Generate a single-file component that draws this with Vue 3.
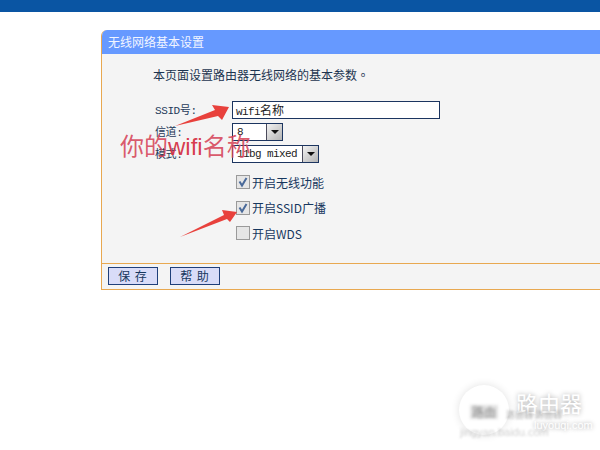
<template>
  <div class="page">
    <div class="top-bar"></div>
    <div class="panel">
      <div class="panel-title">无线网络基本设置</div>
      <div class="panel-body">
        <p class="intro">本页面设置路由器无线网络的基本参数<span class="stop">。</span></p>
        <div class="form">
          <div class="field ssid">
            <span class="label">SSID号:</span>
            <div class="text-input"><span class="latin">wifi</span>名称</div>
          </div>
          <div class="field">
            <span class="label">信道:</span>
            <div class="select channel">
              <span class="select-value">8</span>
              <span class="select-btn"><i></i></span>
            </div>
          </div>
          <div class="field">
            <span class="label">模式:</span>
            <div class="select mode">
              <span class="select-value">11bg mixed</span>
              <span class="select-btn"><i></i></span>
            </div>
          </div>
          <div class="checks">
            <div v-for="opt in options" :key="opt.text" class="check-row">
              <span class="checkbox">
                <svg v-if="opt.checked" viewBox="0 0 12 12" width="12" height="12">
                  <path d="M2.5 5.5 5 9.5 9.5 2" fill="none" stroke="#4a6a9a" stroke-width="2"/>
                </svg>
              </span>
              <span class="check-text">{{ opt.text }}</span>
            </div>
          </div>
        </div>
      </div>
      <div class="panel-footer">
        <button class="btn">保 存</button>
        <button class="btn">帮 助</button>
      </div>
    </div>

    <svg class="arrows" viewBox="0 0 600 450" width="600" height="450">
      <path d="M175 126 215 110 212 105 229 107 222 120 218 116Z" fill="#e8413c"/>
      <path d="M180 237 224 215 222 210 237 212 230 222 227 219Z" fill="#e8413c"/>
    </svg>
    <div class="note">你的<span class="note-latin">wifi</span>名称</div>

    <div class="watermark">
      <div class="wm-circle"></div>
      <div class="wm-logo">路由</div>
      <div class="wm-brand">路由器</div>
      <div class="wm-sub">路由器 路由器</div>
      <div class="wm-site">luyouqi.com</div>
      <div class="wm-small">jingyan.baidu.com</div>
    </div>
  </div>
</template>

<script setup>
const options = [
  { text: '开启无线功能', checked: true },
  { text: '开启SSID广播', checked: true },
  { text: '开启WDS', checked: false }
]
</script>

<style>
html, body {
  margin: 0;
  background: #fff;
}
</style>

<style scoped>
.page {
  position: relative;
  width: 600px;
  height: 450px;
  overflow: hidden;
  background: #fff;
  font-family: "Noto Sans CJK SC", "Liberation Sans", sans-serif;
  font-size: 12px;
  color: #17375e;
}

.top-bar {
  height: 12px;
  background: #0a55a3;
}

.panel {
  margin: 18px 0 0 101px;
  height: 259px;
  border-left: 1px solid #e8a850;
  border-bottom: 1px solid #e8a850;
  border-top-left-radius: 6px;
  background: #f4f4f4;
  display: flex;
  flex-direction: column;
  overflow: hidden;
}

.panel-title {
  height: 24px;
  line-height: 24px;
  padding-left: 6px;
  background: #6699ff;
  color: #f2f5ff;
}

.panel-body {
  flex: 1;
  padding: 11px 0 0 51px;
}

.intro {
  margin: 0;
  height: 20px;
  line-height: 20px;
  color: #1c3450;
}

.stop {
  font-family: "Noto Sans CJK TC", sans-serif;
}

.form {
  margin-top: 16px;
  display: flex;
  flex-direction: column;
  gap: 4px;
}

.field {
  display: flex;
  align-items: center;
  height: 18px;
}

.label {
  width: 79px;
  padding-left: 2px;
  padding-bottom: 2px;
  box-sizing: border-box;
  font-family: "Liberation Mono", "Noto Sans CJK SC", monospace;
  font-size: 11px;
  letter-spacing: -0.4px;
  color: #1f3a5a;
}

.text-input {
  width: 208px;
  height: 18px;
  box-sizing: border-box;
  border: 1px solid #1c3560;
  background: #fff;
  padding-left: 3px;
  line-height: 16px;
  color: #222;
  font-size: 12px;
}

.latin {
  font-family: "Liberation Mono", monospace;
  font-size: 11px;
  letter-spacing: -0.6px;
}

.select {
  height: 18px;
  box-sizing: border-box;
  border: 1px solid #1c3560;
  background: #fff;
  display: flex;
  justify-content: space-between;
  align-items: stretch;
}

.channel {
  width: 51px;
}

.mode {
  width: 87px;
}

.select-value {
  padding-left: 4px;
  line-height: 16px;
  font-family: "Liberation Mono", monospace;
  font-size: 11px;
  letter-spacing: -0.6px;
  color: #222;
}

.select-btn {
  width: 16px;
  background: linear-gradient(135deg, #f2f2f2, #b4b4b4);
  border-left: 1px solid #4a4a5a;
  box-sizing: border-box;
  display: flex;
  align-items: center;
  justify-content: center;
}

.select-btn i {
  width: 0;
  height: 0;
  border-left: 4px solid transparent;
  border-right: 4px solid transparent;
  border-top: 4px solid #111;
}

.checks {
  margin: 6px 0 0 83px;
  display: flex;
  flex-direction: column;
  gap: 7.5px;
}

.check-row {
  display: flex;
  align-items: center;
  height: 18px;
  gap: 2px;
}

.checkbox {
  width: 12px;
  height: 12px;
  border: 1px solid #9a9a9a;
  background: #e6e6e6;
  display: flex;
}

.check-text {
  font-size: 12px;
  color: #17375e;
}

.panel-footer {
  height: 26px;
  border-top: 1px solid #e8a850;
  padding: 3px 0 0 6px;
  display: flex;
  gap: 12px;
  box-sizing: border-box;
}

.btn {
  width: 50px;
  height: 18px;
  padding: 0;
  border: 1px solid #1f3f7a;
  background: #d9dcf8;
  color: #17375e;
  font-family: inherit;
  font-size: 12px;
  letter-spacing: 1px;
  line-height: 16px;
}

.arrows {
  position: absolute;
  left: 0;
  top: 0;
  pointer-events: none;
}

.note {
  position: absolute;
  left: 120px;
  top: 128px;
  line-height: 34px;
  font-family: "Noto Sans CJK SC", sans-serif;
  font-size: 24px;
  color: rgba(214, 70, 90, 0.9);
  white-space: nowrap;
}

.note-latin {
  font-family: "Liberation Sans", sans-serif;
  color: rgba(214, 50, 70, 0.95);
}

.watermark {
  position: absolute;
  left: 450px;
  top: 375px;
  width: 150px;
  height: 75px;
}

.wm-circle {
  position: absolute;
  left: 9px;
  top: 10px;
  width: 50px;
  height: 50px;
  border-radius: 50%;
  background: #fff;
  box-shadow: 0 0 8px rgba(0, 0, 0, 0.12);
}

.wm-logo {
  position: absolute;
  left: 20px;
  top: 30px;
  width: 28px;
  line-height: 14px;
  text-align: center;
  font-size: 12px;
  color: #888;
  background: #e2e2e2;
  filter: blur(1.4px);
}

.wm-brand {
  position: absolute;
  left: 66px;
  top: 13px;
  font-size: 22px;
  line-height: 28px;
  color: #fff;
  text-shadow: 0 0 5px rgba(0, 0, 0, 0.35);
  white-space: nowrap;
}

.wm-sub {
  position: absolute;
  left: 56px;
  top: 34px;
  font-size: 9px;
  line-height: 12px;
  color: rgba(90, 90, 90, 0.45);
  filter: blur(0.8px);
  white-space: nowrap;
}

.wm-site {
  position: absolute;
  left: 84px;
  top: 44px;
  font-family: "Liberation Sans", sans-serif;
  font-size: 11px;
  line-height: 13px;
  color: #fff;
  text-shadow: 0 0 4px rgba(0, 0, 0, 0.4);
  white-space: nowrap;
}

.wm-small {
  position: absolute;
  left: 10px;
  top: 51px;
  font-family: "Liberation Sans", sans-serif;
  font-size: 11px;
  color: rgba(120, 120, 120, 0.35);
  filter: blur(1px);
  white-space: nowrap;
}
</style>
